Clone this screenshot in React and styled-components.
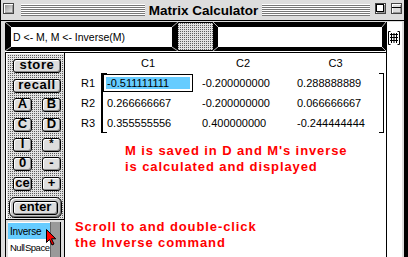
import styled, { createGlobalStyle } from "styled-components";

// *** global
const GlobalStyle = createGlobalStyle`
  html, body {
    margin: 0;
    padding: 0;
    background: #fff;
  }
  body {
    overflow: hidden;
  }
  * {
    box-sizing: border-box;
  }
`;

const dotted = `
  background-color: #e2e2e2;
  background-image:
    linear-gradient(90deg, transparent 1px, #e2e2e2 1px),
    linear-gradient(#5c5c5c 1px, #e2e2e2 1px);
  background-size: 2px 2px;
`;

// *** data
const matrix = [
  ["R1", ["-0.511111111", "-0.200000000", "0.288888889"]],
  ["R2", ["0.266666667", "-0.200000000", "0.066666667"]],
  ["R3", ["0.355555556", "0.400000000", "-0.244444444"]],
];

const keyPairs = [
  ["A", "B"],
  ["C", "D"],
  ["I", "*"],
  ["0", "-"],
  ["ce", "+"],
];

// *** window + title bar
const Window = styled.div`
  width: 408px;
  height: 257px;
  display: flex;
  flex-direction: column;
  background: #ddd;
  border-left: 1px solid #000;
  border-right: 4px solid #000;
  overflow: hidden;
  font-family: "Liberation Sans", Arial, sans-serif;
`;

const TitleBar = styled.div`
  height: 21px;
  flex: none;
  display: flex;
  align-items: flex-start;
  background: #ddd;
  border-bottom: 1px solid #000;
`;

const TitleBox = styled.div`
  position: relative;
  width: 11px;
  height: 11px;
  margin: ${(p) => p.$m};
  border: 1px solid #444;
  background: ${(p) =>
    p.$close ? "linear-gradient(135deg, #8a8a8a, #f4f4f4)" : "#ddd"};
  box-shadow: inset 1px 1px #fff, inset -1px -1px #999;

  &::after {
    content: "";
    position: absolute;
    display: ${(p) => (p.$close ? "none" : "block")};
    left: 0;
    top: ${(p) => (p.$collapse ? "3px" : "0")};
    width: ${(p) => (p.$collapse ? "9px" : "6px")};
    height: ${(p) => (p.$collapse ? "1px" : "6px")};
    border: ${(p) => (p.$collapse ? "none" : "1px solid #000")};
    background: ${(p) => (p.$collapse ? "#000" : "#fff")};
  }
`;

const Stripes = styled.div`
  width: ${(p) => p.$w}px;
  height: 12px;
  margin-top: 4px;
  margin-left: ${(p) => p.$ml || 0}px;
  background: repeating-linear-gradient(#fff 0 1px, #777 1px 2px);
`;

const Title = styled.div`
  width: 117px;
  padding-top: 1px;
  text-align: center;
  font-size: 13.5px;
  font-weight: 700;
  line-height: 20px;
  color: #000;
  white-space: nowrap;
`;

// *** body
const Body = styled.div`
  flex: 1;
  min-height: 0;
  display: flex;
  padding: 1px 2px 0 4px;
`;

const Main = styled.div`
  width: 382px;
  display: flex;
  flex-direction: column;
  border-right: 1px solid #000;
`;

const SideStrip = styled.div`
  width: 15px;
  background: #fff;
  padding: 9px 0 0 1px;
`;

const TopBar = styled.div`
  height: 30px;
  flex: none;
  display: flex;
  background: #000;
  border-bottom: 1px solid #fff;
`;

const Frame = styled.div`
  position: relative;
  width: 173px;
  height: 29px;
  padding: 5px ${(p) => p.$pr}px 4px ${(p) => p.$pl}px;
`;

const BevelSvg = styled.svg`
  position: absolute;
  left: 0;
  top: 0;
  pointer-events: none;
`;

const Field = styled.div`
  height: 100%;
  background: #fff;
  padding-left: 2px;
  font-size: 10.5px;
  line-height: 20px;
  color: #000;
  white-space: nowrap;
`;

const Divider = styled.div`
  width: 35px;
  margin: 1px 0;
  ${dotted}
`;

const Lower = styled.div`
  flex: 1;
  min-height: 0;
  display: flex;
  border-top: 1px solid #000;
`;

// *** left panel
const LeftPanel = styled.div`
  width: 60px;
  display: flex;
  flex-direction: column;
  border-left: 1px solid #000;
  border-right: 1px solid #000;
`;

const ButtonPad = styled.div`
  flex: 1;
  padding: 6px 0 0 7px;
  box-shadow: inset 1px 1px #fff;
  ${dotted}
`;

const Keys = styled.div`
  display: grid;
  grid-template-columns: 19px 19px;
  grid-auto-rows: 14px;
  column-gap: 10px;
  row-gap: 5.67px;
`;

const Key = styled.div`
  grid-column: ${(p) => (p.$wide ? "1 / span 2" : "auto")};
  height: 14px;
  border: 1px solid #000;
  border-radius: 3px;
  background: #ddd;
  box-shadow: inset 1px 1px #fff, inset -1px -1px #8a8a8a;
  text-align: center;
  font-size: ${(p) => (p.$small ? "11px" : "13px")};
  font-weight: 700;
  letter-spacing: ${(p) => (p.$wide ? "0.6px" : "0")};
  line-height: 9px;
  color: #000;
`;

const EnterRing = styled.div`
  width: 53px;
  height: 21px;
  margin: 6px 0 0 -4px;
  padding: 3px;
  border: 1px solid #000;
  border-radius: 6px;
  background: #c8c8c8;
  box-shadow: inset 1px 1px #fff, inset -1px -1px #777;
`;

const ListBox = styled.div`
  position: relative;
  height: 38px;
  flex: none;
  display: flex;
  padding: 2px 3px 0 2px;
  border-top: 1px solid #000;
  background: #ddd;
`;

const Items = styled.div`
  width: 42px;
  padding-top: 1px;
  background: #fff;
  overflow: hidden;
`;

const Item = styled.div`
  height: 16px;
  padding-left: 2px;
  background: ${(p) => (p.$active ? "#66ccff" : "#fff")};
  font-size: ${(p) => (p.$tight ? "9.5px" : "10px")};
  letter-spacing: ${(p) => (p.$tight ? "-0.5px" : "-0.2px")};
  word-spacing: ${(p) => (p.$tight ? "-1.5px" : "0")};
  line-height: 17px;
  color: #000;
  white-space: nowrap;
`;

const ScrollTrack = styled.div`
  width: 11px;
  background: #9a9a9a;
  border-left: 1px solid #666;
  border-right: 1px solid #000;
`;

const Pointer = styled.svg`
  position: absolute;
  left: 39px;
  top: 8px;
`;

// *** matrix content
const Content = styled.div`
  flex: 1;
  background: #fff;
  display: flex;
  flex-direction: column;
  font-size: 11px;
  color: #000;
`;

const HeaderRow = styled.div`
  display: grid;
  grid-template-columns: 38px 95px 95px 90px;
  height: 20px;
  line-height: 20px;
`;

const ColHead = styled.div`
  padding-right: 5px;
  text-align: center;
`;

const MatrixRow = styled.div`
  display: flex;
`;

const Labels = styled.div`
  width: 36px;
`;

const Label = styled.div`
  height: 20px;
  padding-right: 6px;
  text-align: right;
  line-height: 20px;
`;

const Bracketed = styled.div`
  position: relative;
  width: 283px;
  padding-left: 2px;
  display: grid;
  grid-template-columns: 95px 95px 1fr;
  grid-auto-rows: 20px;

  &::before,
  &::after {
    content: "";
    position: absolute;
    top: 0;
    bottom: 0;
    width: 4px;
    border-top: 1px solid #000;
    border-bottom: 1px solid #000;
  }
  &::before {
    left: 0;
    border-left: 2px solid #000;
  }
  &::after {
    right: 0;
    border-right: 1px solid #000;
  }
`;

const Cell = styled.div`
  padding-left: 4px;
  line-height: 20px;
  white-space: nowrap;
`;

const EditCell = styled.div`
  width: 90px;
  height: 18px;
  margin-top: 1px;
  padding: 2px;
  border: 1px solid #000;
`;

const Selected = styled.div`
  height: 12px;
  padding-left: 1px;
  background: #66ccff;
  line-height: 12px;
  white-space: nowrap;
`;

const Note = styled.div`
  margin: ${(p) => p.$m};
  color: #ff0000;
  font-size: 13px;
  font-weight: 700;
  letter-spacing: 0.9px;
  line-height: 15.5px;
  white-space: nowrap;
`;

// *** small drawings
const Bevel = ({ w, h, l, r }) => (
  <BevelSvg width={w} height={h}>
    <path
      d={`M0 0L${l} 5M${w} 0L${w - r} 5M0 ${h}L${l} ${h - 4}M${w} ${h}L${w - r} ${h - 4}`}
      stroke="#b4b4b4"
      strokeWidth="1"
    />
  </BevelSvg>
);

const GridIcon = () => (
  <svg width="12" height="14" viewBox="0 0 12 14" fill="none" stroke="#000">
    <path d="M0.5 0.5v13M0.5 0.5h2M0.5 13.5h2M11.5 0.5v13M11.5 0.5h-2M11.5 13.5h-2" />
    <path d="M2 3.5h8M2 6.5h8M2 9.5h8M3.5 2v10M6 2v10M8.5 2v10" />
  </svg>
);

const App = () => (
  <>
    <GlobalStyle />
    <Window>
      <TitleBar>
        <TitleBox $close $m="3px 0 0 2px" />
        <Stripes $w={124} $ml={7} />
        <Title>Matrix Calculator</Title>
        <Stripes $w={108} />
        <TitleBox $m="3px 0 0 5px" />
        <TitleBox $collapse $m="3px 0 0 5px" />
      </TitleBar>

      <Body>
        <Main>
          <TopBar>
            <Frame $pl={6} $pr={6}>
              <Bevel w={173} h={29} l={6} r={6} />
              <Field>D &lt;- M, M &lt;- Inverse(M)</Field>
            </Frame>
            <Divider />
            <Frame $pl={5} $pr={4}>
              <Bevel w={173} h={29} l={5} r={4} />
              <Field />
            </Frame>
          </TopBar>

          <Lower>
            <LeftPanel>
              <ButtonPad>
                <Keys>
                  <Key $wide>store</Key>
                  <Key $wide>recall</Key>
                  {keyPairs.map(([a, b]) => [
                    <Key key={a}>{a}</Key>,
                    <Key key={b} $small={b === "*"}>
                      {b}
                    </Key>,
                  ])}
                </Keys>
                <EnterRing>
                  <Key>enter</Key>
                </EnterRing>
              </ButtonPad>
              <ListBox>
                <Items>
                  <Item $active>Inverse</Item>
                  <Item $tight>Null Space</Item>
                </Items>
                <ScrollTrack />
                <Pointer width="12" height="18" viewBox="0 0 12 18">
                  <path
                    d="M1.5 1.5v13l3-3 2.5 5.5 2-1-2.5-5.2h4.2z"
                    fill="#ff0000"
                    stroke="#000"
                    strokeWidth="1"
                  />
                </Pointer>
              </ListBox>
            </LeftPanel>

            <Content>
              <HeaderRow>
                <span />
                <ColHead>C1</ColHead>
                <ColHead>C2</ColHead>
                <ColHead>C3</ColHead>
              </HeaderRow>
              <MatrixRow>
                <Labels>
                  {matrix.map(([label]) => (
                    <Label key={label}>{label}</Label>
                  ))}
                </Labels>
                <Bracketed>
                  {matrix.map(([label, values]) =>
                    values.map((v, i) =>
                      label === "R1" && i === 0 ? (
                        <div key={label + i}>
                          <EditCell>
                            <Selected>{v}</Selected>
                          </EditCell>
                        </div>
                      ) : (
                        <Cell key={label + i}>{v}</Cell>
                      )
                    )
                  )}
                </Bracketed>
              </MatrixRow>
              <Note $m="10px 0 0 60px">
                M is saved in D and M's inverse
                <br />
                is calculated and displayed
              </Note>
              <Note $m="45px 0 0 10px">
                Scroll to and double-click
                <br />
                the Inverse command
              </Note>
            </Content>
          </Lower>
        </Main>
        <SideStrip>
          <GridIcon />
        </SideStrip>
      </Body>
    </Window>
  </>
);

export default App;
